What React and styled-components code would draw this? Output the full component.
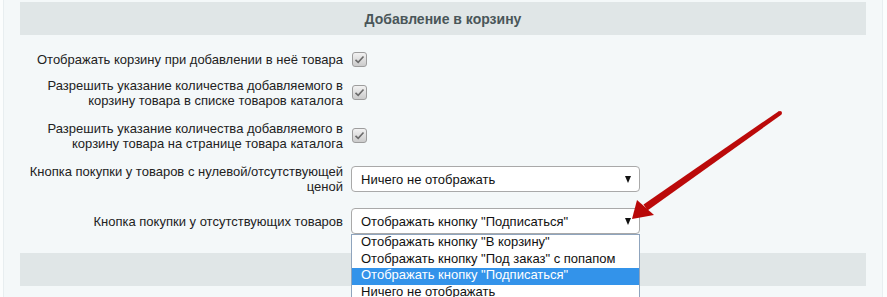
import styled, { createGlobalStyle } from 'styled-components'

const Global = createGlobalStyle`
  html, body {
    margin: 0;
    padding: 0;
    background: #fbfdfd;
    font-family: "Liberation Sans", Arial, sans-serif;
    overflow: hidden;
  }
`

const Page = styled.div`
  position: relative;
  width: 887px;
  height: 297px;
  overflow: hidden;
`

const Panel = styled.div`
  margin-left: 3px;
  width: 880px;
  height: 310px;
  box-sizing: border-box;
  padding: 2px 0 0;
  background: #f4f8f9;
  border-left: 1px solid #e8eef0;
  border-right: 1px solid #e8eef0;
`

const Bar = styled.div`
  margin: ${p => p.$top || 0}px 16px 0;
  height: 33px;
  background: #e0e6e7;
  display: flex;
  align-items: center;
  justify-content: center;
  font-size: 14px;
  font-weight: bold;
  color: #4a5659;
`

const Body = styled.div`
  display: flex;
  flex-direction: column;
  padding-top: 14px;
`

const Row = styled.div`
  display: grid;
  grid-template-columns: 339px 289px;
  column-gap: 8px;
  align-items: center;
  margin-top: ${p => p.$gap || 0}px;
  min-height: ${p => p.$h}px;
`

const Label = styled.div`
  text-align: right;
  white-space: nowrap;
  font-size: 13px;
  line-height: 15px;
  color: #222;
`

const Check = styled.span`
  width: 15px;
  height: 15px;
  margin-left: 1px;
  box-sizing: border-box;
  border: 1px solid #9d9d9d;
  border-radius: 3px;
  background: linear-gradient(#f2f2f2, #cbcbcb);
  display: flex;
  align-items: center;
  justify-content: center;
`

const SelectWrap = styled.div`
  position: relative;
`

const Select = styled.div`
  height: 26px;
  box-sizing: border-box;
  border: 1px solid #a9a9a9;
  border-radius: 4px;
  background: #fff;
  display: flex;
  align-items: center;
  justify-content: space-between;
  padding: 0 8px 0 9px;
  font-size: 13px;
  color: #111;
`

const Caret = styled.span`
  width: 0;
  height: 0;
  border-left: 3.5px solid transparent;
  border-right: 3.5px solid transparent;
  border-top: 7px solid #111;
`

const List = styled.div`
  position: absolute;
  left: 0;
  top: 26px;
  width: 289px;
  box-sizing: border-box;
  border: 1px solid #8fa4bd;
  border-bottom: none;
  background: #fff;
  z-index: 2;
`

const Option = styled.div`
  height: 16.6px;
  line-height: 14px;
  padding-left: 9px;
  font-size: 13px;
  white-space: nowrap;
  color: ${p => (p.$active ? '#fff' : '#111')};
  background: ${p => (p.$active ? '#3393ea' : '#fff')};
`

const Pointer = styled.svg`
  position: absolute;
  left: 0;
  top: 0;
  pointer-events: none;
  z-index: 3;
`

const CheckBox = () => (
  <Check>
    <svg width="11" height="9" viewBox="0 0 11 9">
      <path d="M1.5 4.8 L4.2 7.3 L9.5 1.5" fill="none" stroke="#6b6b6b" strokeWidth="1.6" />
    </svg>
  </Check>
)

const options = [
  'Отображать кнопку "В корзину"',
  'Отображать кнопку "Под заказ" с попапом',
  'Отображать кнопку "Подписаться"',
  'Ничего не отображать',
]

export default function App() {
  return (
    <Page>
      <Global />
      <Panel>
        <Bar>Добавление в корзину</Bar>
        <Body>
          <Row $h={20}>
            <Label>Отображать корзину при добавлении в неё товара</Label>
            <CheckBox />
          </Row>
          <Row $h={31} $gap={8}>
            <Label>
              Разрешить указание количества добавляемого в<br />
              корзину товара в списке товаров каталога
            </Label>
            <CheckBox />
          </Row>
          <Row $h={31} $gap={12}>
            <Label>
              Разрешить указание количества добавляемого в<br />
              корзину товара на странице товара каталога
            </Label>
            <CheckBox />
          </Row>
          <Row $h={26} $gap={13}>
            <Label>
              Кнопка покупки у товаров с нулевой/отсутствующей<br />
              ценой
            </Label>
            <Select>
              <span>Ничего не отображать</span>
              <Caret />
            </Select>
          </Row>
          <Row $h={26} $gap={14}>
            <Label>Кнопка покупки у отсутствующих товаров</Label>
            <SelectWrap>
              <Select>
                <span>Отображать кнопку "Подписаться"</span>
                <Caret />
              </Select>
              <List>
                {options.map((o, i) => (
                  <Option key={o} $active={i === 2}>{o}</Option>
                ))}
              </List>
            </SelectWrap>
          </Row>
        </Body>
        <Bar $top={19} />
      </Panel>
      <Pointer width="887" height="297" viewBox="0 0 887 297">
        <polygon points="781.3,114.8 778.7,111.2 643.5,204.5 647.5,210.5" fill="#bb0a0a" />
        <circle cx="780" cy="113" r="2" fill="#bb0a0a" />
        <polygon points="632,219 637,200 654,215" fill="#b80808" />
      </Pointer>
    </Page>
  )
}
